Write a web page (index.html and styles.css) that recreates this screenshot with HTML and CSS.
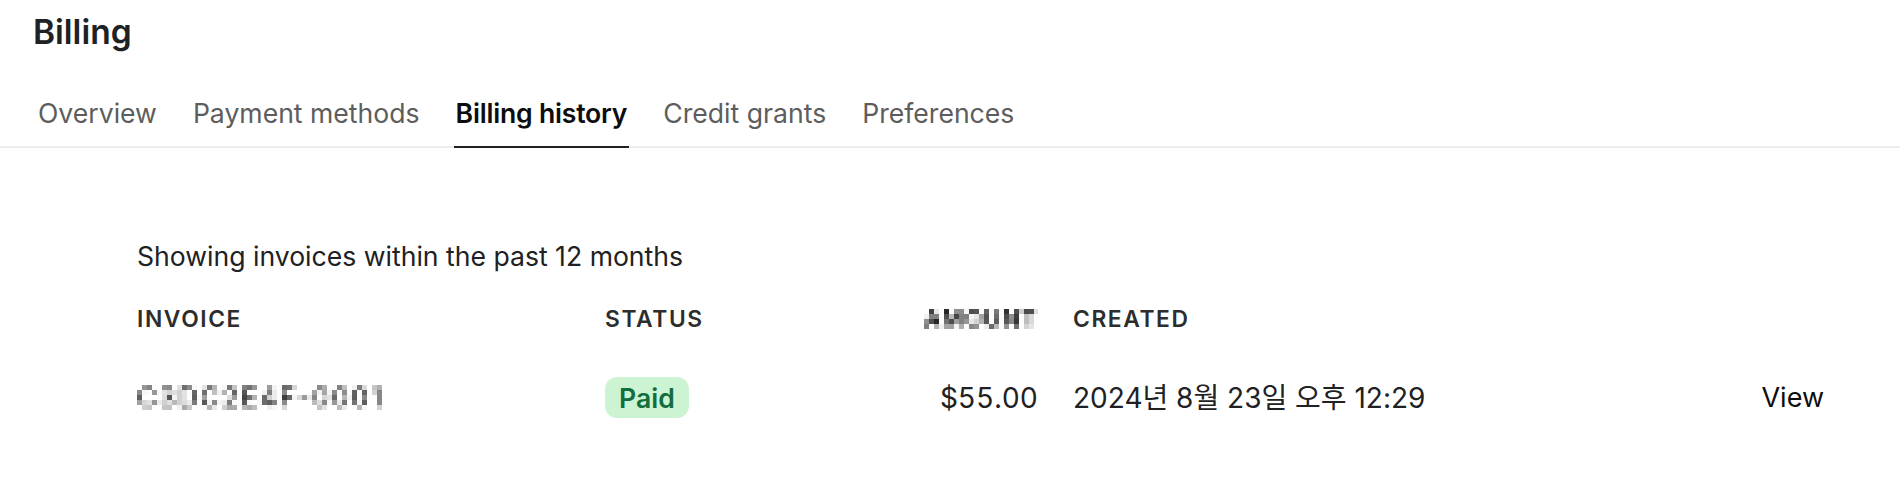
FILE: index.html
```html
<!DOCTYPE html>
<html lang="en">
<head>
<meta charset="utf-8">
<title>Billing</title>
<link rel="stylesheet" href="styles.css">
</head>
<body>
<svg class="defs" width="0" height="0" aria-hidden="true">
  <filter id="pixelate" x="0" y="0" width="1" height="1">
    <feGaussianBlur stdDeviation="0.8" result="soft"/>
    <feFlood x="2" y="2" height="1" width="1"/>
    <feComposite width="5" height="5"/>
    <feTile result="tiles"/>
    <feComposite in="soft" in2="tiles" operator="in"/>
    <feMorphology operator="dilate" radius="2"/>
  </filter>
</svg>
<div class="page">
  <h1 class="title">Billing</h1>
  <nav class="tabs">
    <a class="tab">Overview</a>
    <a class="tab">Payment methods</a>
    <a class="tab active">Billing history</a>
    <a class="tab">Credit grants</a>
    <a class="tab">Preferences</a>
  </nav>
  <section class="content">
    <p class="note">Showing invoices within the past 12 months</p>
    <div class="table">
      <div class="row head">
        <div>INVOICE</div>
        <div>STATUS</div>
        <div class="num"><span class="redacted">AMOUNT</span></div>
        <div>CREATED</div>
        <div></div>
      </div>
      <div class="row item">
        <div><span class="redacted wide">C3DC2E4F-0001</span></div>
        <div><span class="badge">Paid</span></div>
        <div class="num">$55.00</div>
        <div class="date">2024년 8월 23일 오후 12:29</div>
        <div class="action">View</div>
      </div>
    </div>
  </section>
</div>
</body>
</html>
```

FILE: styles.css
```css
* { box-sizing: border-box; }

body {
  margin: 0;
  background: #ffffff;
  color: #202123;
  font-family: Inter, "Noto Sans CJK KR", sans-serif;
}

.defs {
  position: absolute;
  width: 0;
  height: 0;
}

.title {
  margin: 0;
  padding: 12px 33px 0;
  font-size: 33.5px;
  line-height: 40px;
  font-weight: 600;
  color: #202123;
}

.tabs {
  display: flex;
  gap: 32px;
  margin-top: 43px;
  padding: 0 36px;
  border-bottom: 2px solid #ededed;
}

.tab {
  padding: 0 2px 15px;
  margin-bottom: -2px;
  font-size: 26.6px;
  line-height: 36px;
  color: #5d5d5d;
  border-bottom: 2px solid transparent;
  cursor: pointer;
}

.tab.active {
  color: #0d0d0d;
  font-weight: 600;
  letter-spacing: -0.2px;
  border-bottom-color: #202123;
}

.content {
  padding: 90px 76px 0 137px;
}

.note {
  margin: 0;
  font-size: 26.6px;
  line-height: 36px;
  color: #202123;
}

.table {
  margin-top: 30px;
}

.row {
  display: grid;
  grid-template-columns: 433px 248px 150px 1fr auto;
  column-gap: 35px;
  align-items: center;
}

.head {
  font-size: 22.8px;
  line-height: 30px;
  font-weight: 600;
  letter-spacing: 1.6px;
  color: #2d2d2d;
}

.item {
  margin-top: 43px;
  min-height: 41px;
  font-size: 28px;
  line-height: 36px;
  color: #202123;
}

.num {
  text-align: right;
  font-variant-numeric: tabular-nums;
}

.redacted {
  display: inline-block;
  filter: url(#pixelate);
  color: #111111;
}

.redacted.wide {
  font-size: 27px;
  letter-spacing: 2.4px;
}

.badge {
  display: inline-flex;
  align-items: center;
  height: 41px;
  padding: 0 14px;
  border-radius: 12px;
  background: #cdf4d2;
  color: #126e3f;
  font-size: 26.6px;
  font-weight: 600;
}

.action {
  color: #0d0d0d;
  font-size: 27px;
  cursor: pointer;
}
```
